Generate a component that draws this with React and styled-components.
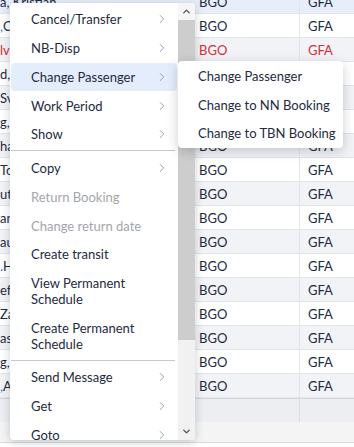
import React from 'react'
import styled, { createGlobalStyle } from 'styled-components'
import { ChevronRight, ChevronUp, ChevronDown } from 'lucide-react'

const GlobalStyle = createGlobalStyle`
  html, body {
    margin: 0;
    padding: 0;
    background: #fff;
  }
  body {
    font-family: Lato, "Noto Sans", sans-serif;
    font-size: 13px;
    color: #1e2a42;
  }
`

const Screen = styled.div`
  position: relative;
  width: 354px;
  height: 447px;
  overflow: hidden;
  background: #fff;
`

const Grid = styled.div`
  display: grid;
  grid-template-columns: 191px 109px 1fr;
  margin-top: -10px;
`

const Cell = styled.div`
  height: 24px;
  box-sizing: border-box;
  display: flex;
  align-items: center;
  padding-left: ${p => (p.first ? '0' : '8px')};
  border-bottom: 1px solid #e2e5ea;
  border-right: ${p => (p.last ? 'none' : '1px solid #e2e5ea')};
  background: ${p => (p.selected ? '#e6eef9' : p.odd ? '#fff' : '#f2f3f6')};
  color: ${p => (p.red ? '#d32f3a' : '#1e2a42')};
  white-space: nowrap;
  overflow: hidden;
`

const Blue = styled.span`
  color: #2f7fd8;
`

const FooterCell = styled.div`
  height: 24px;
  box-sizing: border-box;
  background: #eceef1;
  border-top: 1px solid #d3d6db;
  border-right: ${p => (p.last ? 'none' : '1px solid #dcdfe3')};
`

const BottomBar = styled.div`
  height: 20px;
  background: #f4f4f4;
  border-bottom: 1px solid #dcdcdc;
`

const Menu = styled.div`
  position: absolute;
  left: 10px;
  top: 3px;
  width: 185px;
  height: 437px;
  display: flex;
  background: #fff;
  border-radius: 4px;
  box-shadow: 0 2px 10px rgba(20, 30, 50, 0.22);
  overflow: hidden;
`

const List = styled.div`
  flex: 1;
  padding: 2px 1px;
  overflow: hidden;
`

const Item = styled.div`
  display: flex;
  align-items: center;
  padding: 6.375px 8px 6.375px 20px;
  line-height: 16px;
  border-radius: 4px;
  white-space: nowrap;
  background: ${p => (p.active ? '#e4edfb' : 'transparent')};
  color: ${p => (p.disabled ? '#a3a6ab' : '#1e2a42')};
`

const Label = styled.span`
  flex: 1;
`

const Arrow = styled(ChevronRight)`
  color: #8c929b;
  flex: none;
`

const Separator = styled.div`
  height: 1px;
  margin: 1.5px 2px 2.4px 0;
  background: #c6c8cc;
`

const Scrollbar = styled.div`
  width: 17px;
  display: flex;
  flex-direction: column;
  background: #f1f1f1;
`

const ScrollButton = styled.div`
  height: 17px;
  display: flex;
  align-items: center;
  justify-content: center;
  color: #505050;
  background: ${p => (p.top ? '#f5f5f5' : '#f1f1f1')};
`

const Thumb = styled.div`
  height: 320px;
  background: #cdcdcd;
`

const Track = styled.div`
  flex: 1;
`

const SubMenu = styled.div`
  position: absolute;
  left: 178px;
  top: 61px;
  width: 165px;
  padding: 0.5px 0;
  background: #fff;
  border-radius: 4px;
  box-shadow: 0 3px 12px rgba(20, 30, 50, 0.22);
`

const rows = [
  { name: 'a, Kristian', selected: true },
  { name: <><Blue>,</Blue> C</> },
  { name: 'lvi', red: true },
  { name: 'd,' },
  { name: 'Sve' },
  { name: 'g,' },
  { name: 'ha' },
  { name: 'To' },
  { name: 'ut' },
  { name: 'an' },
  { name: 'au' },
  { name: <><Blue>.</Blue> H</> },
  { name: 'eff' },
  { name: 'Za' },
  { name: 'as' },
  { name: 'g,' },
  { name: <><Blue>,</Blue> A</> },
]

const menuTop = [
  ['Cancel/Transfer', true],
  ['NB-Disp', true],
  ['Change Passenger', true, true],
  ['Work Period', true],
  ['Show', true],
]

const menuMid = [
  ['Copy', true],
  ['Return Booking', false, false, true],
  ['Change return date', false, false, true],
  ['Create transit'],
  ['View Permanent Schedule'],
  ['Create Permanent Schedule'],
]

const menuEnd = [
  ['Send Message', true],
  ['Get', true],
  ['Goto', true],
]

const renderItems = list =>
  list.map(([label, sub, active, disabled]) => (
    <Item key={label} active={active} disabled={disabled}>
      <Label>
        {label.includes('Permanent') ? (
          <>
            {label.replace(' Schedule', '')}
            <br />
            Schedule
          </>
        ) : (
          label
        )}
      </Label>
      {sub && <Arrow size={14} strokeWidth={1.5} />}
    </Item>
  ))

export default function App() {
  return (
    <Screen>
      <GlobalStyle />
      <Grid>
        {rows.map((r, i) => (
          <React.Fragment key={i}>
            <Cell first odd={i % 2} selected={r.selected} red={r.red}>
              {r.name}
            </Cell>
            <Cell odd={i % 2} selected={r.selected} red={r.red}>
              BGO
            </Cell>
            <Cell last odd={i % 2} selected={r.selected} red={r.red}>
              GFA
            </Cell>
          </React.Fragment>
        ))}
        <FooterCell />
        <FooterCell />
        <FooterCell last />
      </Grid>
      <BottomBar />

      <Menu>
        <List>
          {renderItems(menuTop)}
          <Separator />
          {renderItems(menuMid)}
          <Separator />
          {renderItems(menuEnd)}
        </List>
        <Scrollbar>
          <ScrollButton top>
            <ChevronUp size={11} strokeWidth={3} />
          </ScrollButton>
          <Thumb />
          <Track />
          <ScrollButton>
            <ChevronDown size={11} strokeWidth={3} />
          </ScrollButton>
        </Scrollbar>
      </Menu>

      <SubMenu>
        <Item>Change Passenger</Item>
        <Item>Change to NN Booking</Item>
        <Item>Change to TBN Booking</Item>
      </SubMenu>
    </Screen>
  )
}
